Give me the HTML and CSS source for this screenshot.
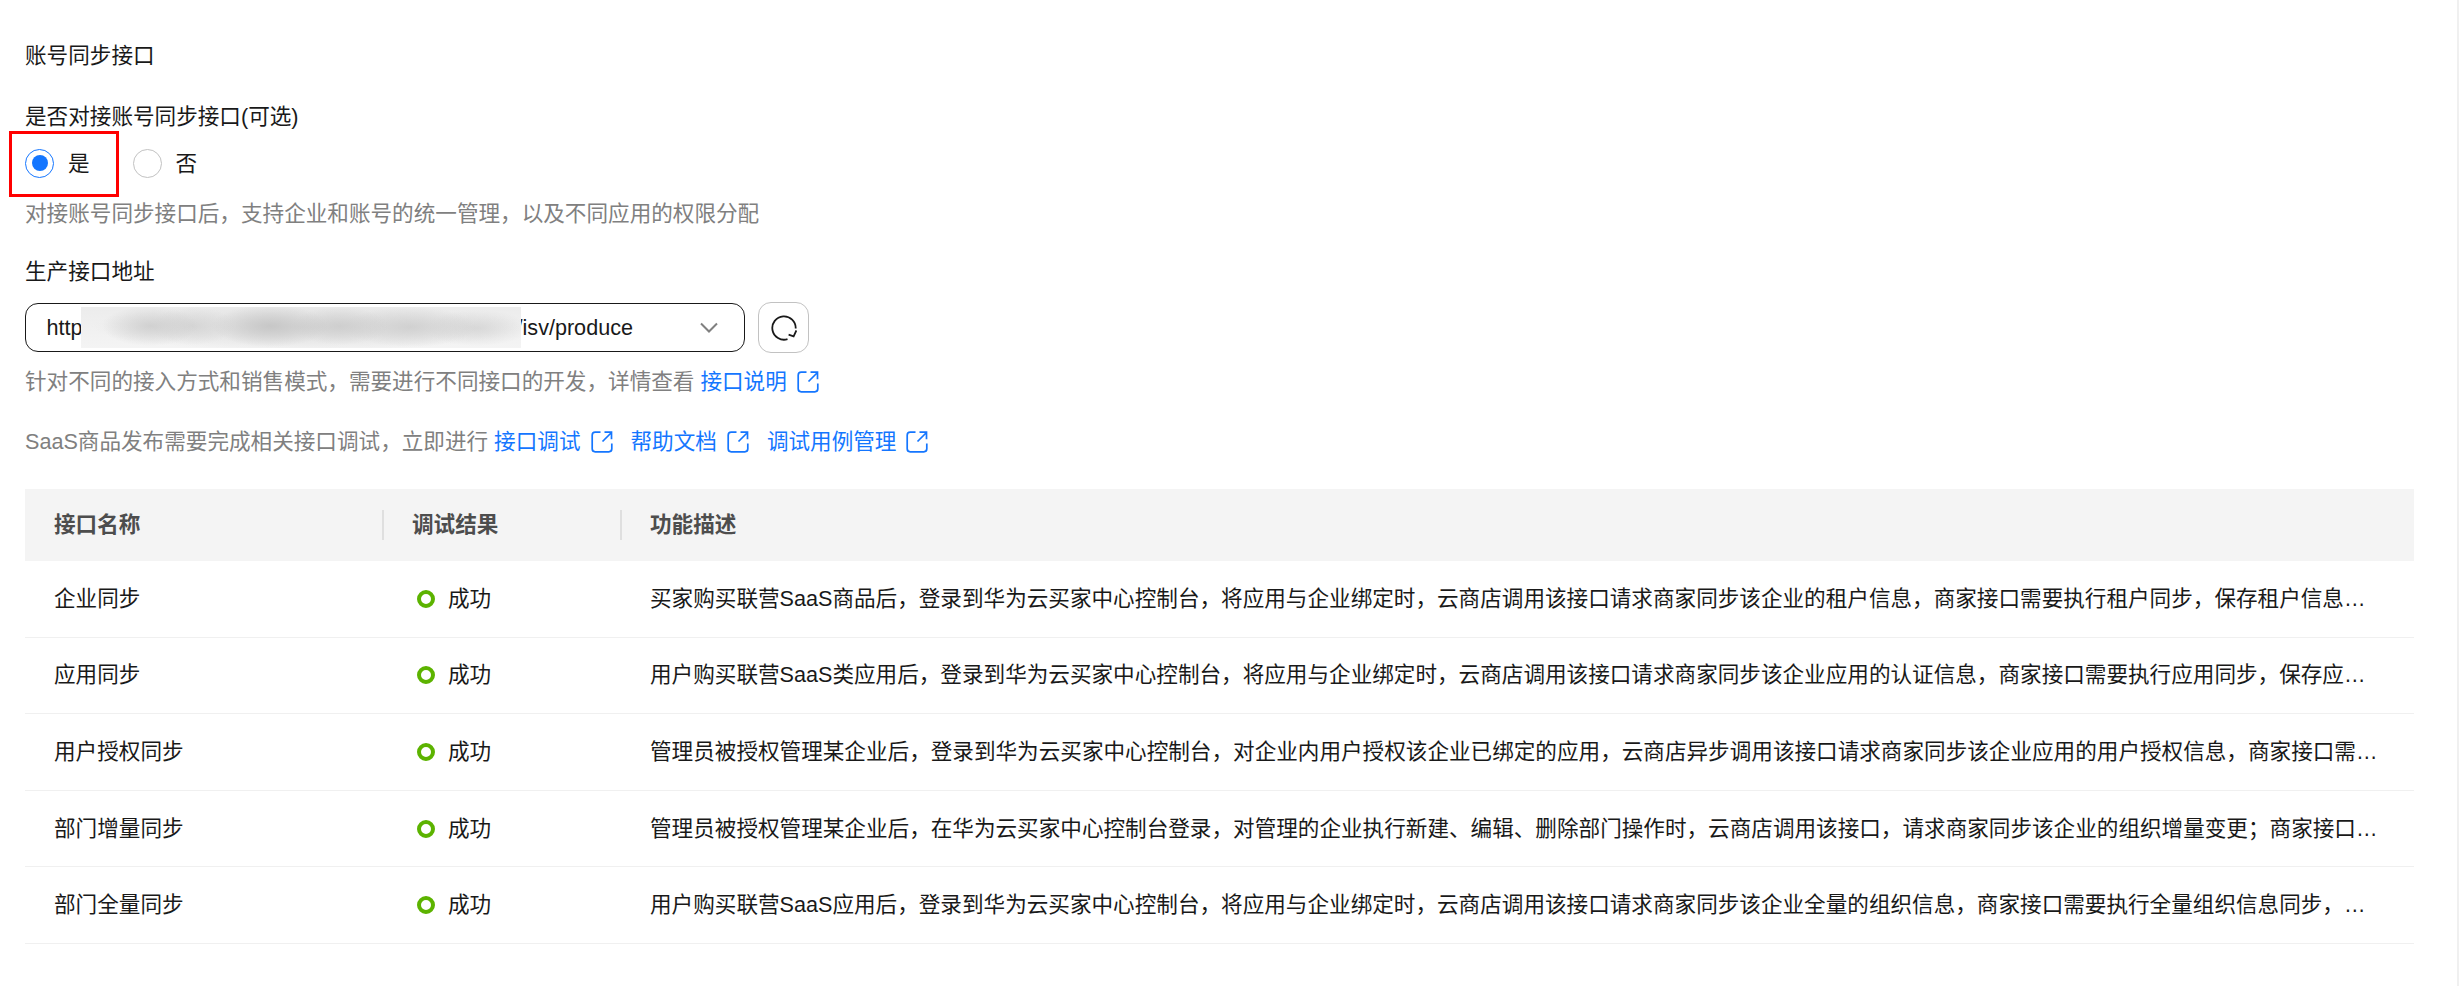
FILE: index.html
```html
<!DOCTYPE html>
<html lang="zh-CN">
<head>
<meta charset="utf-8">
<title>账号同步接口</title>
<link rel="stylesheet" href="styles.css">
</head>
<body>
<div class="page">
  <main class="main">
    <h2 class="title">账号同步接口</h2>
    <div class="label label-radio">是否对接账号同步接口(可选)</div>
    <div class="radio-group">
      <span class="highlight"></span>
      <label class="radio"><span class="radio-dot is-checked"></span><span class="radio-text">是</span></label>
      <label class="radio"><span class="radio-dot"></span><span class="radio-text">否</span></label>
    </div>
    <p class="hint hint-radio">对接账号同步接口后，支持企业和账号的统一管理，以及不同应用的权限分配</p>
    <div class="label label-url">生产接口地址</div>
    <div class="url-row">
      <div class="select">
        <span>http</span><span class="mask"></span><span>/isv/produce</span>
        <svg class="chevron" viewBox="0 0 20 11" width="20" height="11"><path d="M2 1.5l8 8 8-8" fill="none" stroke="#808080" stroke-width="2"/></svg>
      </div>
      <button class="refresh" type="button" aria-label="刷新">
        <svg viewBox="0 0 26 26" width="26" height="26"><path d="M16.5 24.2A11.7 11.7 0 1 1 24.7 13.5" fill="none" stroke="#191919" stroke-width="1.8"/><path d="M17.6 19.7L22.6 21.3 25.4 15.4" fill="none" stroke="#191919" stroke-width="1.8"/></svg>
      </button>
    </div>
    <p class="hint hint-url">针对不同的接入方式和销售模式，需要进行不同接口的开发，详情查看 <a class="link" href="#">接口说明<svg class="ext" viewBox="0 0 22 22" width="22" height="22"><path d="M9.5 1.2H4.2a3 3 0 0 0-3 3v13.6a3 3 0 0 0 3 3h13.6a3 3 0 0 0 3-3v-5.3M11.5 10.5l9-9M13.5 1.2h7v7"/></svg></a></p>
    <p class="hint hint-saas">SaaS商品发布需要完成相关接口调试，立即进行 <a class="link" href="#">接口调试<svg class="ext" viewBox="0 0 22 22" width="22" height="22"><path d="M9.5 1.2H4.2a3 3 0 0 0-3 3v13.6a3 3 0 0 0 3 3h13.6a3 3 0 0 0 3-3v-5.3M11.5 10.5l9-9M13.5 1.2h7v7"/></svg></a><a class="link" href="#">帮助文档<svg class="ext" viewBox="0 0 22 22" width="22" height="22"><path d="M9.5 1.2H4.2a3 3 0 0 0-3 3v13.6a3 3 0 0 0 3 3h13.6a3 3 0 0 0 3-3v-5.3M11.5 10.5l9-9M13.5 1.2h7v7"/></svg></a><a class="link" href="#">调试用例管理<svg class="ext" viewBox="0 0 22 22" width="22" height="22"><path d="M9.5 1.2H4.2a3 3 0 0 0-3 3v13.6a3 3 0 0 0 3 3h13.6a3 3 0 0 0 3-3v-5.3M11.5 10.5l9-9M13.5 1.2h7v7"/></svg></a></p>
    <div class="table" role="table">
      <div class="row row-head" role="row">
        <div class="cell" role="columnheader">接口名称</div>
        <div class="cell cell-sep" role="columnheader">调试结果</div>
        <div class="cell cell-sep" role="columnheader">功能描述</div>
      </div>
      <div class="row" role="row"><div class="cell">企业同步</div><div class="cell status"><i class="ring"></i>成功</div><div class="cell desc">买家购买联营SaaS商品后，登录到华为云买家中心控制台，将应用与企业绑定时，云商店调用该接口请求商家同步该企业的租户信息，商家接口需要执行租户同步，保存租户信息并返回处理结果</div></div>
      <div class="row" role="row"><div class="cell">应用同步</div><div class="cell status"><i class="ring"></i>成功</div><div class="cell desc">用户购买联营SaaS类应用后，登录到华为云买家中心控制台，将应用与企业绑定时，云商店调用该接口请求商家同步该企业应用的认证信息，商家接口需要执行应用同步，保存应用信息并返回处理结果</div></div>
      <div class="row" role="row"><div class="cell">用户授权同步</div><div class="cell status"><i class="ring"></i>成功</div><div class="cell desc">管理员被授权管理某企业后，登录到华为云买家中心控制台，对企业内用户授权该企业已绑定的应用，云商店异步调用该接口请求商家同步该企业应用的用户授权信息，商家接口需要执行用户授权同步</div></div>
      <div class="row" role="row"><div class="cell">部门增量同步</div><div class="cell status"><i class="ring"></i>成功</div><div class="cell desc">管理员被授权管理某企业后，在华为云买家中心控制台登录，对管理的企业执行新建、编辑、删除部门操作时，云商店调用该接口，请求商家同步该企业的组织增量变更；商家接口需要执行增量同步</div></div>
      <div class="row" role="row"><div class="cell">部门全量同步</div><div class="cell status"><i class="ring"></i>成功</div><div class="cell desc">用户购买联营SaaS应用后，登录到华为云买家中心控制台，将应用与企业绑定时，云商店调用该接口请求商家同步该企业全量的组织信息，商家接口需要执行全量组织信息同步，保存组织信息并返回结果</div></div>
    </div>
  </main>
  <div class="scroll-track"></div>
</div>
</body>
</html>
```
FILE: styles.css
```css
* { box-sizing: border-box; }
html, body { margin: 0; height: 100%; overflow: hidden; }
body {
  background: #fff;
  color: #191919;
  font-family: "Liberation Sans", "Noto Sans CJK SC", sans-serif;
  font-size: 21.6px;
  line-height: 30px;
}
.page { display: flex; height: 100%; }
.main { flex: 1; min-width: 0; padding: 41px 43px 0 25px; }
.scroll-track { width: 2px; background: #f0f0f0; }

.title { margin: 0; font: inherit; }
.label-radio { margin-top: 31px; }
.radio-group { position: relative; display: flex; gap: 43px; height: 30px; margin-top: 16px; }
.highlight {
  position: absolute;
  left: -16px;
  top: -17px;
  width: 110px;
  height: 66px;
  border: 3px solid #f00;
}
.radio { display: flex; align-items: center; gap: 14px; }
.radio-text { padding-top: 2px; }
.radio-dot {
  width: 29px;
  height: 29px;
  border: 1.5px solid #c2c2c2;
  border-radius: 50%;
  display: flex;
  align-items: center;
  justify-content: center;
}
.radio-dot.is-checked { border-color: #1476ff; }
.radio-dot.is-checked::after {
  content: "";
  width: 16px;
  height: 16px;
  border-radius: 50%;
  background: #1476ff;
}
.hint { margin: 0; color: #808080; }
.hint-radio { margin-top: 21px; }
.label-url { margin-top: 28px; }
.url-row { display: flex; align-items: center; gap: 13px; margin-top: 15px; }
.select {
  width: 720px;
  height: 49px;
  border: 1.5px solid #191919;
  border-radius: 13px;
  padding-left: 20.5px;
  display: flex;
  align-items: center;
  white-space: nowrap;
}
.mask {
  position: relative;
  flex: none;
  width: 440px;
  height: 41px;
  margin: 0 -4px 0 -2px;
  background:
    radial-gradient(ellipse 48px 20px at 69px 19px, rgba(200, 200, 200, .75), transparent),
    radial-gradient(ellipse 42px 19px at 112px 19px, rgba(205, 205, 205, .65), transparent),
    radial-gradient(ellipse 58px 21px at 189px 19px, rgba(195, 195, 195, .85), transparent),
    radial-gradient(ellipse 48px 19px at 259px 19px, rgba(200, 200, 200, .7), transparent),
    radial-gradient(ellipse 66px 20px at 329px 20px, rgba(200, 200, 200, .7), transparent),
    radial-gradient(ellipse 52px 18px at 396px 21px, rgba(205, 205, 205, .65), transparent),
    radial-gradient(ellipse 215px 24px at 225px 20px, #dadada, transparent),
    linear-gradient(#ececec, #f4f4f4);
}
.chevron { margin-left: auto; margin-right: 25px; }
.refresh {
  width: 51px;
  height: 51px;
  padding: 0;
  background: #fff;
  border: 1.5px solid #c2c2c2;
  border-radius: 13px;
  display: flex;
  align-items: center;
  justify-content: center;
}
.hint-url { margin-top: 14px; }
.hint-saas { margin-top: 30px; }
.link {
  display: inline-flex;
  align-items: center;
  gap: 10px;
  color: #1476ff;
  text-decoration: none;
  vertical-align: top;
}
.link + .link { margin-left: 18px; }
.ext { fill: none; stroke: #1476ff; stroke-width: 1.7; }

.table { margin-top: 32px; }
.row {
  display: grid;
  grid-template-columns: 358px 238px minmax(0, 1fr);
  align-items: center;
  height: 76.6px;
  border-bottom: 1px solid #f0f0f0;
}
.row-head {
  height: 72px;
  background: #f4f4f4;
  border-bottom: 0;
  color: #4d4d4d;
  font-weight: 700;
}
.cell { position: relative; padding: 0 29px; }
.cell-sep::before {
  content: "";
  position: absolute;
  left: -1px;
  top: 0;
  width: 1.5px;
  height: 30px;
  background: #dfdfdf;
}
.desc { overflow: hidden; white-space: nowrap; text-overflow: ellipsis; }
.status { display: flex; align-items: center; gap: 13px; }
.ring {
  width: 18px;
  height: 18px;
  margin-left: 5px;
  border: 4px solid #5cb300;
  border-radius: 50%;
}
```
